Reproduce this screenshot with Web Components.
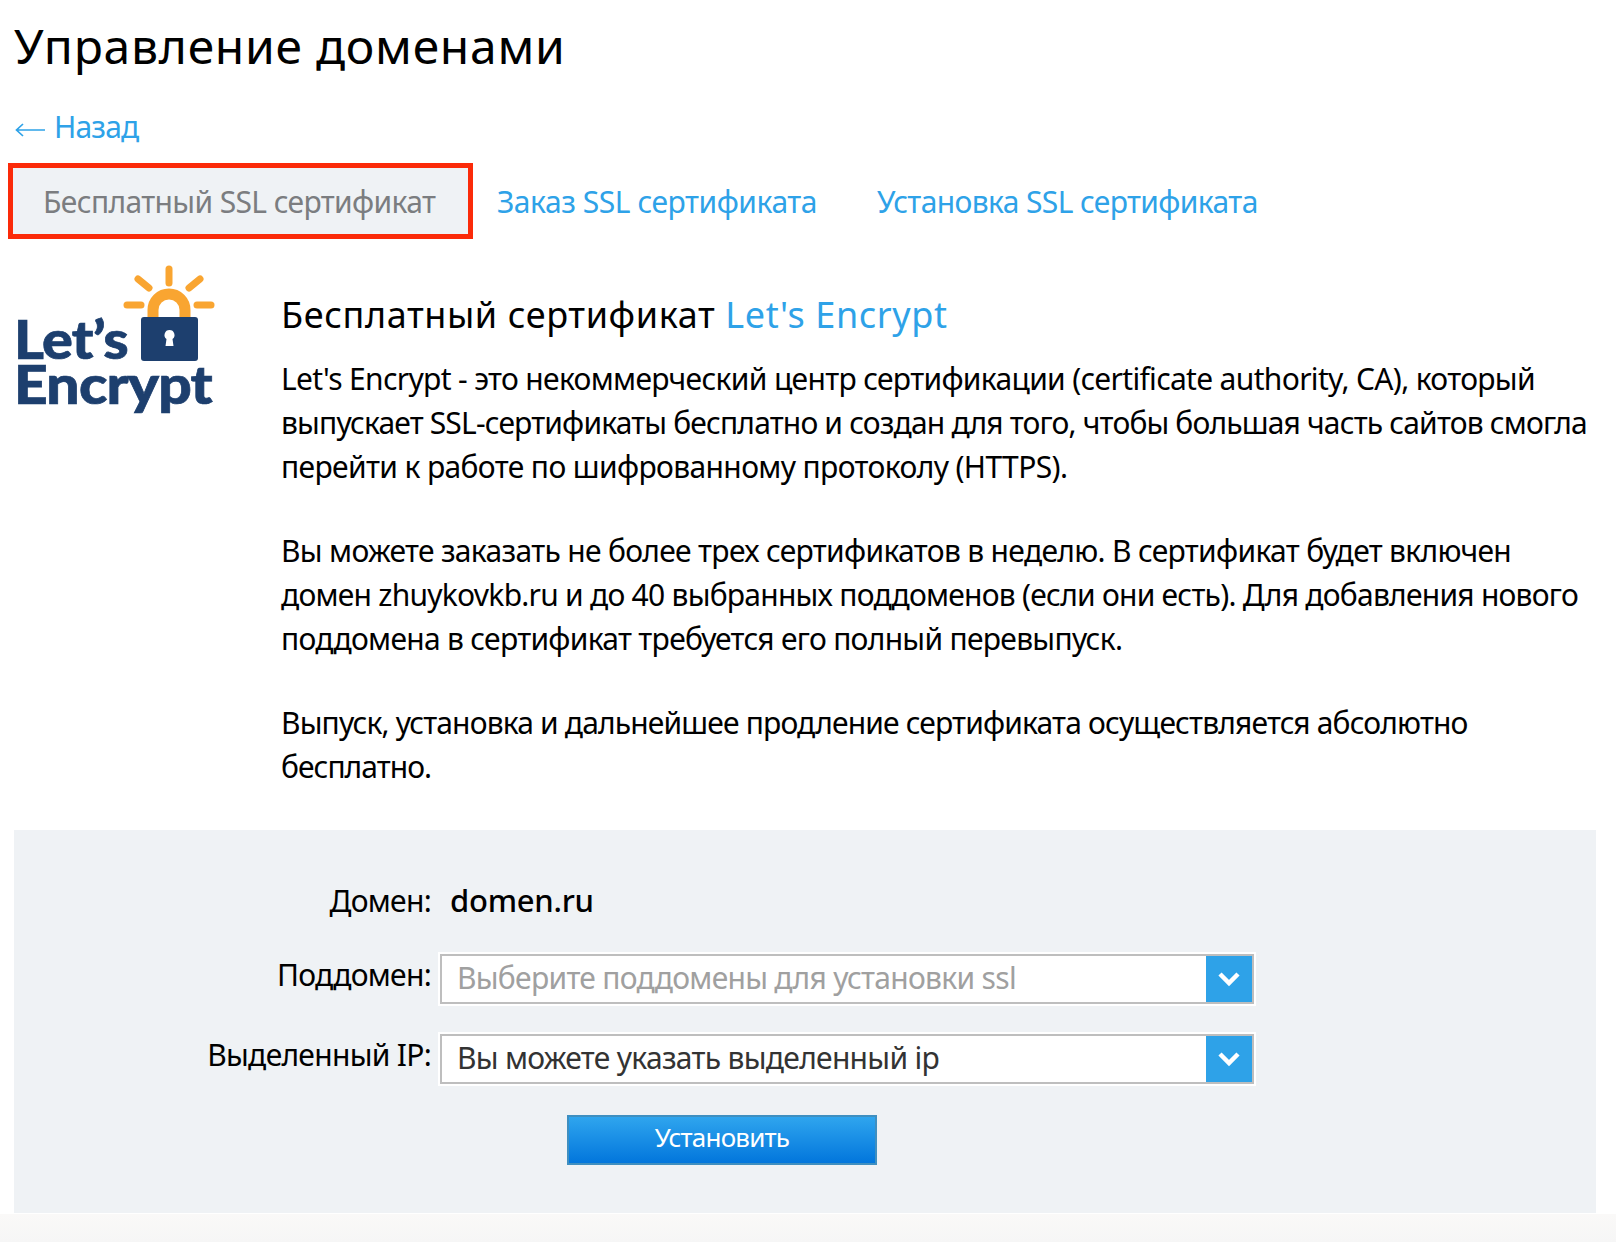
<!DOCTYPE html>
<html lang="ru">
<head>
<meta charset="utf-8">
<title>Управление доменами</title>
<style>
    html, body { margin: 0; padding: 0; background: #fff; }
    body {
        font-family: "Noto Sans", "Open Sans", sans-serif;
        color: #000;
        height: 1242px;
        overflow: hidden;
        background: linear-gradient(#fff 1214px, #faf9f8 1214px, #f6f6f6 1242px);
    }
    a { color: #2ea2e8; }
</style>
</head>
<body>
<domain-page>
    <page-title>Управление доменами</page-title>
    <back-link>Назад</back-link>
    <ssl-tabs>
        <ssl-tab active>Бесплатный SSL сертификат</ssl-tab>
        <ssl-tab style="letter-spacing:-.45px">Заказ SSL сертификата</ssl-tab>
        <ssl-tab>Установка SSL сертификата</ssl-tab>
    </ssl-tabs>
    <cert-info>
        <le-logo slot="logo"></le-logo>
        <span slot="heading">Бесплатный сертификат <a>Let's Encrypt</a></span>
        <p><span style="letter-spacing:-.67px">Let's Encrypt - это некоммерческий центр сертификации (certificate authority, CA), который</span><br><span style="letter-spacing:-.83px">выпускает SSL-сертификаты бесплатно и создан для того, чтобы большая часть сайтов смогла</span><br><span style="letter-spacing:-.63px">перейти к работе по шифрованному протоколу (HTTPS).</span></p>
        <p><span style="letter-spacing:-.68px">Вы можете заказать не более трех сертификатов в неделю. В сертификат будет включен</span><br>домен zhuykovkb.ru и до 40 выбранных поддоменов (если они есть). Для добавления нового<br><span style="letter-spacing:-.7px">поддомена в сертификат требуется его полный перевыпуск.</span></p>
        <p><span style="letter-spacing:-.84px">Выпуск, установка и дальнейшее продление сертификата осуществляется абсолютно</span><br><span style="letter-spacing:-.95px">бесплатно.</span></p>
    </cert-info>
    <install-form>
        <form-row flat label="Домен:"><b class="domain">domen.ru</b></form-row>
        <form-row label="Поддомен:"><select-box placeholder>Выберите поддомены для установки ssl</select-box></form-row>
        <form-row label="Выделенный IP:"><select-box>Вы можете указать выделенный ip</select-box></form-row>
        <action-button>Установить</action-button>
    </install-form>
</domain-page>

<script>
// small helper, every element just has a static shadow template
function defineSimple(name, html) {
    const tpl = document.createElement("template");
    tpl.innerHTML = html;
    customElements.define(name, class extends HTMLElement {
        constructor() {
            super();
            this.attachShadow({mode: "open"});
            this.shadowRoot.append(tpl.content.cloneNode(true));
        }
    });
}

defineSimple("domain-page", `
    <style>
        :host { display: block; padding: 0 20px 0 14px; }
    </style>
    <slot></slot>
`);

defineSimple("page-title", `
    <style>
        :host {
            display: block;
            padding-top: 15px;
            font-size: 48px;
            line-height: 62px;
            letter-spacing: 0.73px;
            color: #000;
        }
    </style>
    <slot></slot>
`);

defineSimple("back-link", `
    <style>
        :host {
            display: flex;
            align-items: center;
            margin-top: 28px;
            font-size: 30px;
            line-height: 44px;
            letter-spacing: -0.8px;
            color: #2ea2e8;
        }
        svg { margin: 5px 9px 0 1px; }
    </style>
    <svg width="30" height="14" viewBox="0 0 30 14">
        <path d="M30 7H1.500M8 1L1.500 7L8 13" fill="none" stroke="#2ea2e8" stroke-width="1.700"/>
    </svg>
    <slot></slot>
`);

defineSimple("ssl-tabs", `
    <style>
        :host {
            display: flex;
            align-items: stretch;
            margin: 14px 0 0 -6px;
            height: 76px;
        }
    </style>
    <slot></slot>
`);

class SslTab extends HTMLElement {
    constructor() {
        super();
        this.attachShadow({mode: "open"});
        this.shadowRoot.innerHTML = `
            <style>
                :host {
                    display: flex;
                    align-items: center;
                    box-sizing: border-box;
                    padding: 0 30px;
                    font-size: 30px;
                    letter-spacing: -0.62px;
                    color: #2ea2e8;
                    white-space: nowrap;
                }
                :host([active]) {
                    width: 465px;
                    padding: 0 0 0 30px;
                    margin-right: -6px;
                    border: 5px solid #fb2a09;
                    background: #eff2f5;
                    color: #7b7d80;
                }
            </style>
            <slot></slot>
        `;
    }
}
customElements.define("ssl-tab", SslTab);

defineSimple("cert-info", `
    <style>
        :host {
            display: grid;
            grid-template-columns: 267px 1fr;
            margin-top: 24px;
            font-size: 30px;
            line-height: 44px;
            letter-spacing: -0.75px;
            white-space: nowrap;
        }
        .heading {
            margin-top: 30px;
            font-size: 36px;
            line-height: 44px;
            letter-spacing: 0.6px;
            color: #000;
        }
        .text { margin-top: 20px; }
        ::slotted(p) { margin: 0 0 40px; }
        ::slotted(span) { display: block; }
    </style>
    <div><slot name="logo"></slot></div>
    <div>
        <div class="heading"><slot name="heading"></slot></div>
        <div class="text"><slot></slot></div>
    </div>
`);

defineSimple("le-logo", `
    <style>
        :host { display: block; width: 216px; height: 160px; }
        svg { display: block; }
        text {
            font-family: Lato, "Open Sans", sans-serif;
            font-weight: 900;
            fill: #1d3f6e;
            stroke: #1d3f6e;
            stroke-width: 0.7px;
        }
    </style>
    <svg width="216" height="160" viewBox="0 0 216 160">
        <g stroke="#f9a531" stroke-width="7" stroke-linecap="round" fill="none">
            <path d="M155 6V20"/>
            <path d="M124 16L135 25"/>
            <path d="M186 16L175 25"/>
            <path d="M113 42H127"/>
            <path d="M183 42H197"/>
        </g>
        <path d="M139 54V47A16 16 0 0 1 171 47V54" fill="none" stroke="#f9a531" stroke-width="11"/>
        <rect x="127" y="54" width="57" height="44" rx="3" fill="#1d3f6e"/>
        <path d="M155.500 67a5 5 0 0 1 3 9l1 7h-8l1-7a5 5 0 0 1 3-9z" fill="#fff"/>
        <text x="0" y="96" font-size="54" textLength="114" lengthAdjust="spacingAndGlyphs">Let’s</text>
        <text x="0" y="141" font-size="54" textLength="198" lengthAdjust="spacingAndGlyphs">Encrypt</text>
    </svg>
`);

defineSimple("install-form", `
    <style>
        :host {
            display: block;
            box-sizing: border-box;
            width: 1582px;
            height: 383px;
            margin-top: 1px;
            padding: 49px 0 0;
            background: #eff2f5;
        }
        ::slotted(action-button) { margin: 29px 0 0 553px; }
        ::slotted(form-row) { margin-bottom: 26px; }
        ::slotted(form-row:first-child) { margin-bottom: 31px; }
    </style>
    <slot></slot>
`);

class FormRow extends HTMLElement {
    constructor() {
        super();
        this.attachShadow({mode: "open"});
        this.shadowRoot.innerHTML = `
            <style>
                :host {
                    display: grid;
                    grid-template-columns: 417px 1fr;
                    column-gap: 7px;
                    align-items: center;
                    font-size: 30px;
                    letter-spacing: -0.7px;
                    white-space: nowrap;
                }
                .label { text-align: right; padding-bottom: 10px; }
                :host([flat]) .label { padding-bottom: 0; }
                ::slotted(.domain) {
                    font-weight: 500;
                    font-size: 31px;
                    letter-spacing: -0.25px;
                    padding-left: 12px;
                }
            </style>
            <div class="label">${this.getAttribute("label")}</div>
            <div><slot></slot></div>
        `;
    }
}
customElements.define("form-row", FormRow);

class SelectBox extends HTMLElement {
    constructor() {
        super();
        this.attachShadow({mode: "open"});
        this.shadowRoot.innerHTML = `
            <style>
                :host {
                    display: flex;
                    box-sizing: border-box;
                    width: 818px;
                    height: 54px;
                    border: 2px solid #fff;
                    background: #fff;
                    box-shadow: inset 0 0 0 2px #bebebe;
                    padding: 2px;
                    color: #333;
                    font-size: 30px;
                    letter-spacing: -0.7px;
                }
                :host([placeholder]) { color: #a0a0a0; }
                .value { flex: 1; padding-left: 15px; line-height: 44px; }
                .btn {
                    width: 46px;
                    display: flex;
                    align-items: center;
                    justify-content: center;
                    background: #2ea2e8;
                }
            </style>
            <div class="value"><slot></slot></div>
            <div class="btn">
                <svg width="24" height="16" viewBox="0 0 24 16">
                    <path d="M3 3L12 12L21 3" fill="none" stroke="#fff" stroke-width="4.5"/>
                </svg>
            </div>
        `;
    }
}
customElements.define("select-box", SelectBox);

defineSimple("action-button", `
    <style>
        :host {
            display: flex;
            align-items: center;
            justify-content: center;
            box-sizing: border-box;
            width: 310px;
            height: 50px;
            border: 2px solid #3f8fc0;
            background: linear-gradient(#2fa5ee, #0276dc);
            color: #fff;
            font-size: 26px;
            letter-spacing: -0.8px;
            padding-bottom: 6px;
        }
    </style>
    <slot></slot>
`);
</script>
</body>
</html>
